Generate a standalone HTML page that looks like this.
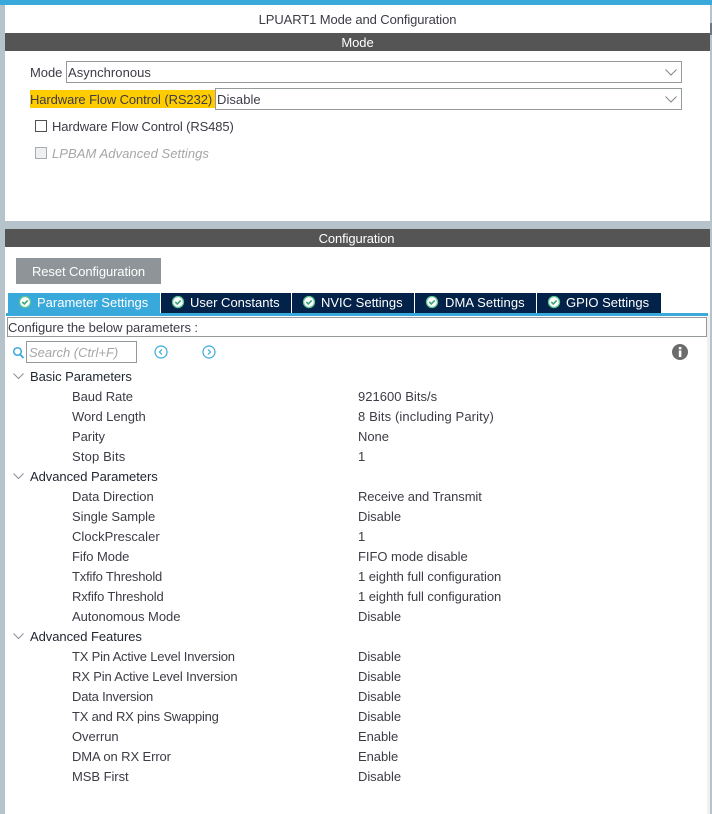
<!DOCTYPE html>
<html><head><meta charset="utf-8"><style>
html,body{margin:0;padding:0;background:#fff}
body{width:712px;height:814px;position:relative;overflow:hidden;font-family:"Liberation Sans",Arial,sans-serif;font-size:13px;color:#3c3c46}
.a{position:absolute}
.t{position:absolute;white-space:nowrap;line-height:21px;height:21px;letter-spacing:-.05px}
.band{position:absolute;left:5px;width:705px;height:18px;background:#545554;color:#fff;text-align:center;line-height:19px;letter-spacing:-.05px}
.sel{position:absolute;box-sizing:border-box;border:1px solid #94999c;background:#fff;height:22px;line-height:21px;padding-left:1px;letter-spacing:.05px}
.sel svg{position:absolute;right:4px;top:7px}
.tab{position:absolute;top:293px;height:20px;background:#022249;color:#fff;line-height:20px;white-space:nowrap}
.tab svg{position:absolute;left:0;top:2px}
.tab span{position:absolute;top:0}
</style></head><body>
<div class="a" style="left:0;top:0;width:712px;height:5px;background:#39a9dc"></div>
<div class="a" style="left:0;top:5px;width:5px;height:809px;background:#b7c3ca"></div>
<div class="a" style="left:710px;top:5px;width:2px;height:809px;background:#b7c3ca"></div>
<div class="a" style="left:710px;top:23px;width:2px;height:12px;background:#6f7a80"></div>
<div class="a" style="left:5px;top:221px;width:705px;height:8px;background:#b7c3ca"></div>
<div class="a" style="left:707px;top:314px;width:3px;height:500px;background:#f0f0f0"></div>

<div class="t" style="left:0;width:715px;text-align:center;top:9px;letter-spacing:-.1px">LPUART1 Mode and Configuration</div>
<div class="band" style="top:33px">Mode</div>

<div class="t" style="left:30px;top:62px">Mode</div>
<div class="sel" style="left:66px;top:61px;width:616px">Asynchronous<svg width="12" height="7"><path d="M.5.5 6 6l5.500-5.500" fill="none" stroke="#80858a"/></svg></div>
<div class="a" style="left:30px;top:90px;width:185px;height:18px;background:#ffcc00"></div>
<div class="t" style="left:30px;top:89px;letter-spacing:-.1px">Hardware Flow Control (RS232)</div>
<div class="sel" style="left:215px;top:88px;width:467px">Disable<svg width="12" height="7"><path d="M.5.5 6 6l5.500-5.500" fill="none" stroke="#80858a"/></svg></div>

<div class="a" style="left:35px;top:120px;width:12px;height:12px;box-sizing:border-box;border:1px solid #505050;background:#fff"></div>
<div class="t" style="left:52px;top:116px;letter-spacing:-.11px">Hardware Flow Control (RS485)</div>
<div class="a" style="left:35px;top:147px;width:12px;height:12px;box-sizing:border-box;border:1px solid #a8acb0;background:#eef0f2"></div>
<div class="t" style="left:52px;top:143px;font-style:italic;color:#a6a6a6;letter-spacing:.06px">LPBAM Advanced Settings</div>

<div class="band" style="top:229px;letter-spacing:-.12px;padding-right:2px;width:703px">Configuration</div>
<div class="a" style="left:16px;top:258px;width:145px;height:26px;background:#8e9498;color:#fff;text-align:center;line-height:27px;letter-spacing:-.1px">Reset Configuration</div>

<div class="a" style="left:6px;top:313px;width:702px;height:3px;background:#39a9dc"></div>
<div class="tab" style="left:8px;width:152px;height:21px;background:#39a9dc"><svg width="14" height="14" viewBox="0 0 14 14" style="left:10px"><circle cx="7" cy="7" r="5.500" fill="#fff" stroke="#5fc594" stroke-width="1.300"/><path d="M4.300 7l2 2 3.400-3.600" fill="none" stroke="#3aa676" stroke-width="1.600"/></svg><span style="left:29px">Parameter Settings</span></div>
<div class="tab" style="left:161px;width:130px"><svg width="14" height="14" viewBox="0 0 14 14" style="left:10px"><circle cx="7" cy="7" r="5.500" fill="#fff" stroke="#5fc594" stroke-width="1.300"/><path d="M4.300 7l2 2 3.400-3.600" fill="none" stroke="#3aa676" stroke-width="1.600"/></svg><span style="left:29px">User Constants</span></div>
<div class="tab" style="left:292px;width:122px"><svg width="14" height="14" viewBox="0 0 14 14" style="left:10px"><circle cx="7" cy="7" r="5.500" fill="#fff" stroke="#5fc594" stroke-width="1.300"/><path d="M4.300 7l2 2 3.400-3.600" fill="none" stroke="#3aa676" stroke-width="1.600"/></svg><span style="left:29px">NVIC Settings</span></div>
<div class="tab" style="left:415px;width:121px"><svg width="14" height="14" viewBox="0 0 14 14" style="left:10px"><circle cx="7" cy="7" r="5.500" fill="#fff" stroke="#5fc594" stroke-width="1.300"/><path d="M4.300 7l2 2 3.400-3.600" fill="none" stroke="#3aa676" stroke-width="1.600"/></svg><span style="left:30px;letter-spacing:.08px">DMA Settings</span></div>
<div class="tab" style="left:537px;width:124px"><svg width="14" height="14" viewBox="0 0 14 14" style="left:10px"><circle cx="7" cy="7" r="5.500" fill="#fff" stroke="#5fc594" stroke-width="1.300"/><path d="M4.300 7l2 2 3.400-3.600" fill="none" stroke="#3aa676" stroke-width="1.600"/></svg><span style="left:29px">GPIO Settings</span></div>

<div class="a" style="left:7px;top:317px;width:700px;height:20px;box-sizing:border-box;border:1px solid #94999c;background:#fff"></div>
<div class="t" style="left:8px;top:317px;letter-spacing:-.07px">Configure the below parameters :</div>

<svg class="a" style="left:12px;top:346px" width="13" height="14" viewBox="0 0 13 14"><circle cx="5.500" cy="5.500" r="3.800" fill="none" stroke="#39a9dc" stroke-width="1.500"/><path d="M8.300 8.500 11.500 12" stroke="#39a9dc" stroke-width="1.800" fill="none"/></svg>
<div class="a" style="left:26px;top:341px;width:111px;height:22px;box-sizing:border-box;border:1px solid #94999c"></div>
<div class="t" style="left:29px;top:342px;font-style:italic;color:#a6a6a6;letter-spacing:0">Search (Ctrl+F)</div>
<svg class="a" style="left:154px;top:345px" width="14" height="14" viewBox="0 0 14 14"><circle cx="7" cy="7" r="6" fill="none" stroke="#39a9dc" stroke-width="1.200"/><path d="M8 4.500 5.500 7 8 9.500" fill="none" stroke="#39a9dc" stroke-width="1.200"/></svg>
<svg class="a" style="left:202px;top:345px" width="14" height="14" viewBox="0 0 14 14"><circle cx="7" cy="7" r="6" fill="none" stroke="#39a9dc" stroke-width="1.200"/><path d="M6 4.500 8.500 7 6 9.500" fill="none" stroke="#39a9dc" stroke-width="1.200"/></svg>
<svg class="a" style="left:672px;top:344px" width="16" height="16" viewBox="0 0 16 16"><circle cx="8" cy="8" r="8" fill="#6b6b6b"/><rect x="6.800" y="6.500" width="2.600" height="6.500" fill="#fff"/><rect x="6.800" y="3" width="2.600" height="2.400" fill="#fff"/></svg>

<svg class="a" style="left:13px;top:373px" width="11" height="7"><path d="M.5.5 5.500 5.500 10.500.5" fill="none" stroke="#8a8f94"/></svg>
<div class="t" style="left:30px;top:366px;color:#1f2530">Basic Parameters</div>
<div class="t" style="left:72px;top:386px">Baud Rate</div><div class="t" style="left:358px;top:386px;letter-spacing:.03px">921600 Bits/s</div>
<div class="t" style="left:72px;top:406px">Word Length</div><div class="t" style="left:358px;top:406px;letter-spacing:.12px">8 Bits (including Parity)</div>
<div class="t" style="left:72px;top:426px">Parity</div><div class="t" style="left:358px;top:426px">None</div>
<div class="t" style="left:72px;top:446px;letter-spacing:.15px">Stop Bits</div><div class="t" style="left:358px;top:446px">1</div>
<svg class="a" style="left:13px;top:473px" width="11" height="7"><path d="M.5.5 5.500 5.500 10.500.5" fill="none" stroke="#8a8f94"/></svg>
<div class="t" style="left:30px;top:466px;color:#1f2530">Advanced Parameters</div>
<div class="t" style="left:72px;top:486px">Data Direction</div><div class="t" style="left:358px;top:486px;letter-spacing:-.1px">Receive and Transmit</div>
<div class="t" style="left:72px;top:506px">Single Sample</div><div class="t" style="left:358px;top:506px">Disable</div>
<div class="t" style="left:72px;top:526px;letter-spacing:.02px">ClockPrescaler</div><div class="t" style="left:358px;top:526px">1</div>
<div class="t" style="left:72px;top:546px">Fifo Mode</div><div class="t" style="left:358px;top:546px">FIFO mode disable</div>
<div class="t" style="left:72px;top:566px;letter-spacing:-.18px">Txfifo Threshold</div><div class="t" style="left:358px;top:566px">1 eighth full configuration</div>
<div class="t" style="left:72px;top:586px;letter-spacing:-.18px">Rxfifo Threshold</div><div class="t" style="left:358px;top:586px">1 eighth full configuration</div>
<div class="t" style="left:72px;top:606px">Autonomous Mode</div><div class="t" style="left:358px;top:606px">Disable</div>
<svg class="a" style="left:13px;top:633px" width="11" height="7"><path d="M.5.5 5.500 5.500 10.500.5" fill="none" stroke="#8a8f94"/></svg>
<div class="t" style="left:30px;top:626px;color:#1f2530">Advanced Features</div>
<div class="t" style="left:72px;top:646px;letter-spacing:-.19px">TX Pin Active Level Inversion</div><div class="t" style="left:358px;top:646px">Disable</div>
<div class="t" style="left:72px;top:666px;letter-spacing:-.15px">RX Pin Active Level Inversion</div><div class="t" style="left:358px;top:666px">Disable</div>
<div class="t" style="left:72px;top:686px;letter-spacing:-.2px">Data Inversion</div><div class="t" style="left:358px;top:686px">Disable</div>
<div class="t" style="left:72px;top:706px;letter-spacing:-.22px">TX and RX pins Swapping</div><div class="t" style="left:358px;top:706px">Disable</div>
<div class="t" style="left:72px;top:726px">Overrun</div><div class="t" style="left:358px;top:726px">Enable</div>
<div class="t" style="left:72px;top:746px;letter-spacing:-.1px">DMA on RX Error</div><div class="t" style="left:358px;top:746px">Enable</div>
<div class="t" style="left:72px;top:766px">MSB First</div><div class="t" style="left:358px;top:766px">Disable</div>
</body></html>
